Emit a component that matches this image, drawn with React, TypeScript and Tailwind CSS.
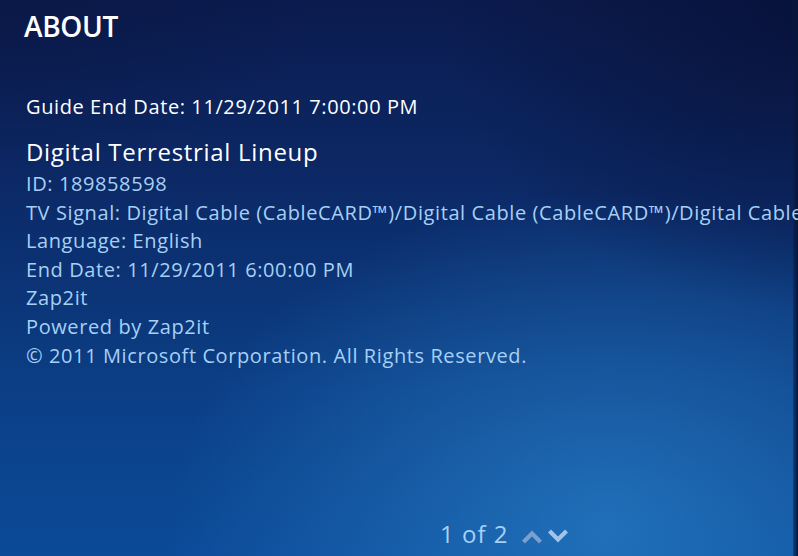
import React from "react";

const lineup = [
  "ID: 189858598",
  "TV Signal: Digital Cable (CableCARD™)/Digital Cable (CableCARD™)/Digital Cable (CableCARD™)/Digital Cable (CableCARD™)",
  "Language: English",
  "End Date: 11/29/2011 6:00:00 PM",
  "Zap2it",
  "Powered by Zap2it",
  "© 2011 Microsoft Corporation. All Rights Reserved.",
];

function Chevron({ up }: { up?: boolean }) {
  return (
    <svg width="22" height="15" viewBox="0 0 22 15" className="block">
      <path
        d={up ? "M2.5 13 L11 4.5 L19.5 13" : "M2.5 2 L11 10.5 L19.5 2"}
        fill="none"
        stroke="currentColor"
        strokeWidth="4.2"
        strokeLinejoin="miter"
      />
    </svg>
  );
}

export default function App() {
  return (
    <div className="relative w-[798px] h-[556px] overflow-hidden font-['Open_Sans',sans-serif] bg-[#0b2a6c]">
      {/* backdrop: navy at the top, brighter blue glow low right */}
      <div className="absolute inset-0 bg-[linear-gradient(180deg,#0b1b4e_0%,#0c2a68_35%,#0b3f86_70%,#0b4a98_100%)]" />
      <div className="absolute inset-0 bg-[radial-gradient(ellipse_55%_60%_at_76%_95%,rgba(42,128,200,0.7),rgba(42,128,200,0)_100%)]" />
      <div className="absolute inset-0 bg-[radial-gradient(ellipse_45%_55%_at_100%_0%,rgba(8,18,58,0.9),rgba(8,18,58,0)_100%)]" />
      <div className="absolute inset-0 bg-[radial-gradient(ellipse_40%_30%_at_0%_0%,rgba(10,22,66,0.6),rgba(10,22,66,0)_100%)]" />
      <div className="absolute top-0 right-0 bottom-0 w-[5px] bg-[linear-gradient(90deg,rgba(8,26,69,0.4),#071638)]" />

      <div className="relative flex flex-col h-full pl-[24px]">
        <h1 className="mt-[7px] text-[28px] leading-[38px] font-semibold text-white tracking-[-0.3px]">
          ABOUT
        </h1>

        <p className="mt-[48px] pl-[2px] text-[20px] leading-[28px] tracking-[0.6px] text-white whitespace-nowrap">
          Guide End Date: 11/29/2011 7:00:00 PM
        </p>

        <p className="mt-[15px] pl-[2px] text-[24px] leading-[32px] tracking-[0.7px] text-white whitespace-nowrap">
          Digital Terrestrial Lineup
        </p>

        <div className="mt-[2px] pl-[2px] flex flex-col text-[20px] leading-[28.6px] tracking-[0.6px] text-[#a6d0f5] whitespace-nowrap">
          {lineup.map((line, i) => (
            <p key={i}>{line}</p>
          ))}
        </div>

        <div className="mt-auto mb-[6px] ml-[416px] flex items-center gap-[13px]">
          <span className="text-[24px] leading-[32px] tracking-[1px] text-[#a6d0f5]">1 of 2</span>
          <div className="flex items-center gap-[4px] pt-[4px]">
            <span className="text-[#7c9fcc]">
              <Chevron up />
            </span>
            <span className="text-[#a2c4ea]">
              <Chevron />
            </span>
          </div>
        </div>
      </div>
    </div>
  );
}
